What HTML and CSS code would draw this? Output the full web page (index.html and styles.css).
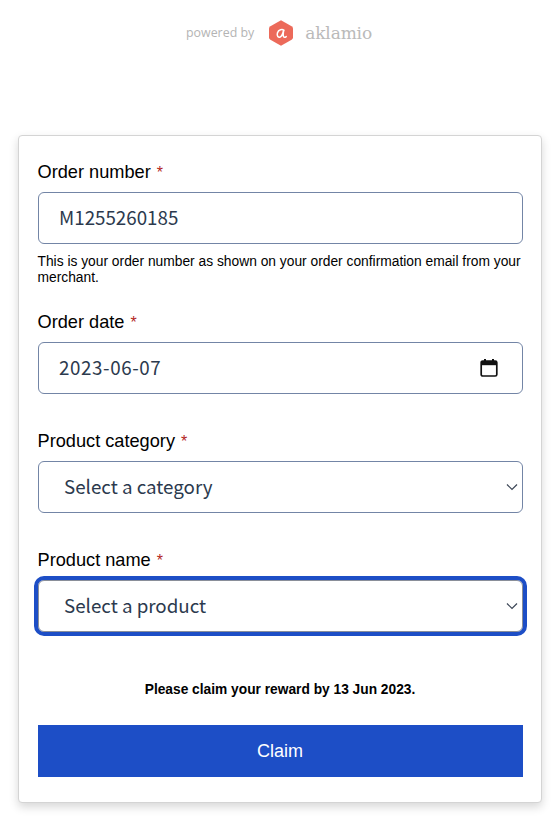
FILE: index.html
```html
<!DOCTYPE html>
<html lang="en">
<head>
<meta charset="utf-8">
<title>Claim your reward</title>
<link rel="stylesheet" href="styles.css">
</head>
<body>
<header class="brand">
  <span class="powered">powered by</span>
  <svg class="logo" width="26" height="28" viewBox="0 0 26 28" aria-hidden="true">
    <path d="M13 1.2 L23.6 7.2 Q25 8 25 9.5 V18.5 Q25 20 23.6 20.8 L13 26.8 L2.4 20.8 Q1 20 1 18.5 V9.5 Q1 8 2.4 7.2 Z" fill="#ec6a5a"/>
    <path d="M16 11.6 C14.6 9.6 10.4 10.4 9.4 14 C8.6 17 10.4 19 12.2 18 C14.4 16.8 15.2 13.5 15.8 10.5 C15.3 13.5 15 16 15.4 17.4 C15.7 18.5 17 18.6 18.2 17.6" fill="none" stroke="#fff" stroke-width="1.5" stroke-linecap="round"/>
  </svg>
  <span class="wordmark">aklamio</span>
</header>
<main class="card">
  <form class="form">
    <div class="field field-number">
      <label class="label">Order number <span class="req">*</span></label>
      <div class="control"><span class="value">M1255260185</span></div>
      <p class="hint">This is your order number as shown on your order confirmation email from your merchant.</p>
    </div>
    <div class="field field-date">
      <label class="label">Order date <span class="req">*</span></label>
      <div class="control"><span class="value value-date">2023-06-07</span>
        <svg class="cal" width="18" height="20" viewBox="0 0 18 20" aria-hidden="true">
          <path d="M5 1v3M13 1v3" stroke="#111" stroke-width="2" fill="none"/>
          <rect x="1.2" y="3" width="15.6" height="15" rx="1.6" fill="none" stroke="#111" stroke-width="1.7"/>
          <rect x="1.2" y="3" width="15.6" height="4.2" fill="#111"/>
        </svg>
      </div>
    </div>
    <div class="field field-cat">
      <label class="label">Product category <span class="req">*</span></label>
      <div class="control select"><span class="value">Select a category</span>
        <svg class="chev" width="12" height="8" viewBox="0 0 12 8" aria-hidden="true"><path d="M1 1.5 L6 6.5 L11 1.5" fill="none" stroke="#3c4656" stroke-width="1.2"/></svg>
      </div>
    </div>
    <div class="field field-prod">
      <label class="label">Product name <span class="req">*</span></label>
      <div class="control select focus"><span class="value">Select a product</span>
        <svg class="chev" width="12" height="8" viewBox="0 0 12 8" aria-hidden="true"><path d="M1 1.5 L6 6.5 L11 1.5" fill="none" stroke="#3c4656" stroke-width="1.2"/></svg>
      </div>
    </div>
    <p class="deadline">Please claim your reward by 13 Jun 2023.</p>
    <button class="claim" type="button">Claim</button>
  </form>
</main>
</body>
</html>
```
FILE: styles.css
```css
html, body { margin: 0; padding: 0; background: #fff; }
body { width: 558px; height: 824px; overflow: hidden; font-family: "Liberation Sans", Arial, sans-serif; color: #000; }
.brand { height: 135px; box-sizing: border-box; padding-top: 19px; display: flex; justify-content: center; align-items: flex-start; }
.powered { font-size: 12.4px; color: #b4b4b4; line-height: 28px; font-family: "Open Sans", sans-serif; font-weight: 400; }
.logo { margin-left: 14px; margin-right: 11px; }
.wordmark { font-family: "DejaVu Serif", serif; font-weight: 300; font-size: 17px; line-height: 28px; color: #bababa; letter-spacing: -.15px; }
.card { margin-left: 18px; width: 524px; height: 668px; box-sizing: border-box; border: 1px solid #d4d4d4; border-radius: 4px; background: #fff; padding: 19px 18.5px 0; box-shadow: 0 4px 10px rgba(0,0,0,.16); }
.form { display: flex; flex-direction: column; }
.field { display: flex; flex-direction: column; }
.label { font-size: 18.2px; line-height: 35px; height: 37px; }
.req { color: #b3261e; font-size: 16px; margin-left: 1px; }
.control { height: 52px; box-sizing: border-box; border: 1px solid #7385a6; border-radius: 6px; display: flex; align-items: center; justify-content: space-between; padding: 0 24px 0 20.5px; background: #fff; }
.select { padding: 0 4px 0 25.5px; }
.value { font-family: "Noto Sans CJK SC", sans-serif; font-size: 18.75px; color: #2c3a4e; margin-bottom: 4px; }
.value-date { letter-spacing: .6px; }
.hint { margin: 10px 0 0; font-size: 13.8px; line-height: 16px; }
.field-date { margin-top: 19px; }
.field-cat { margin-top: 30px; }
.field-prod { margin-top: 30px; }
.focus { outline: 4px solid #1d4ec6; outline-offset: 0; border-color: #8a8f99; }
.deadline { margin: 50px 0 0; text-align: center; font-size: 13.75px; font-weight: 700; line-height: 16px; }
.claim { margin-top: 27px; height: 52px; border: 0; background: #1d4ec6; color: #fff; font: 18px "Liberation Sans", Arial, sans-serif; }
```
